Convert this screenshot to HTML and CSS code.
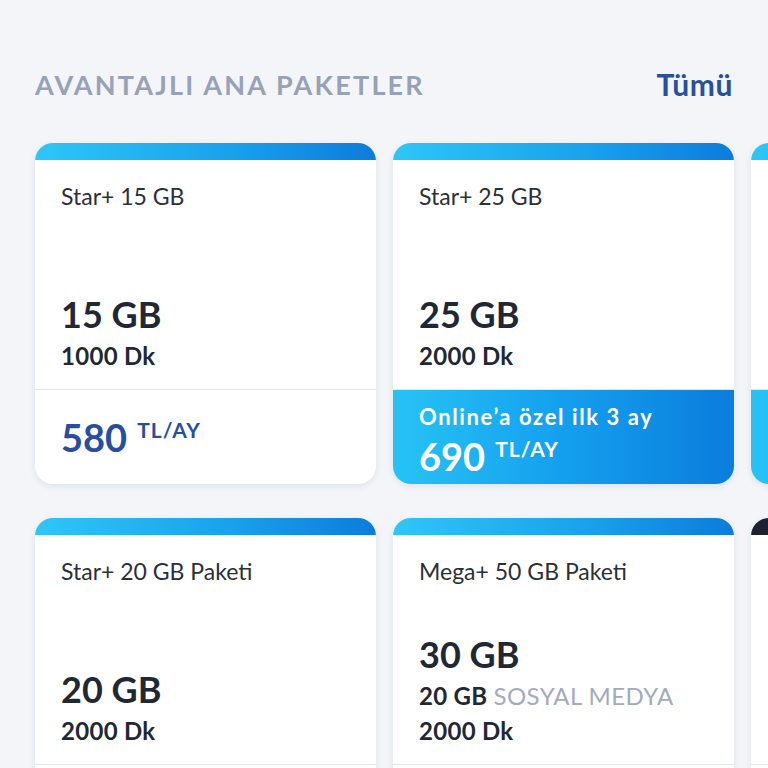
FILE: index.html
```html
<!DOCTYPE html>
<html lang="tr">
<head>
<meta charset="utf-8">
<title>Avantajlı Ana Paketler</title>
<link rel="stylesheet" href="styles.css">
</head>
<body>
<section class="packages">
  <header class="packages-head">
    <h2 class="packages-title">AVANTAJLI ANA PAKETLER</h2>
    <a class="packages-all" href="#">Tümü</a>
  </header>

  <div class="row">
    <article class="card">
      <div class="card-bar"></div>
      <div class="card-body">
        <div class="card-title">Star+ 15 GB</div>
        <div class="card-info">
          <div class="gb">15 GB</div>
          <div class="dk">1000 Dk</div>
        </div>
      </div>
      <div class="card-price">
        <div class="price"><span class="amount">580</span><span class="unit">TL/AY</span></div>
      </div>
    </article>

    <article class="card">
      <div class="card-bar"></div>
      <div class="card-body">
        <div class="card-title">Star+ 25 GB</div>
        <div class="card-info">
          <div class="gb">25 GB</div>
          <div class="dk">2000 Dk</div>
        </div>
      </div>
      <div class="card-price promo">
        <div class="promo-note">Online’a özel ilk 3 ay</div>
        <div class="price"><span class="amount">690</span><span class="unit">TL/AY</span></div>
      </div>
    </article>

    <article class="card">
      <div class="card-bar"></div>
      <div class="card-body"></div>
      <div class="card-price promo"></div>
    </article>
  </div>

  <div class="row">
    <article class="card">
      <div class="card-bar"></div>
      <div class="card-body">
        <div class="card-title">Star+ 20 GB Paketi</div>
        <div class="card-info">
          <div class="gb">20 GB</div>
          <div class="dk">2000 Dk</div>
        </div>
      </div>
      <div class="card-price"></div>
    </article>

    <article class="card">
      <div class="card-bar"></div>
      <div class="card-body">
        <div class="card-title">Mega+ 50 GB Paketi</div>
        <div class="card-info">
          <div class="gb">30 GB</div>
          <div class="dk">20 GB <span class="muted">SOSYAL MEDYA</span></div>
          <div class="dk">2000 Dk</div>
        </div>
      </div>
      <div class="card-price"></div>
    </article>

    <article class="card">
      <div class="card-bar dark"></div>
      <div class="card-body"></div>
      <div class="card-price"></div>
    </article>
  </div>
</section>
</body>
</html>
```

FILE: styles.css
```css
html, body {
  margin: 0;
  padding: 0;
  height: 100%;
  overflow: hidden;
  background: #f3f5f8;
}

body {
  font-family: "Lato", "Liberation Sans", sans-serif;
  color: #262b36;
}

.packages {
  padding: 64px 0 0 35px;
}

.packages-head {
  display: flex;
  justify-content: space-between;
  align-items: center;
  padding-right: 35px;
  height: 40px;
  margin-bottom: 39px;
}

.packages-title {
  margin: 0;
  font-size: 27px;
  font-weight: 700;
  letter-spacing: 2.2px;
  color: #98a1b5;
}

.packages-all {
  font-size: 30px;
  font-weight: 700;
  letter-spacing: 0.6px;
  color: #294f9f;
  text-decoration: none;
}

.row {
  display: flex;
  gap: 17px;
  margin-bottom: 34px;
}

.card {
  flex: 0 0 341px;
  display: flex;
  flex-direction: column;
  background: #ffffff;
  border-radius: 18px;
  overflow: hidden;
  box-shadow: 0 2px 6px rgba(40, 50, 80, 0.10);
}

.card-bar {
  height: 17px;
  background: linear-gradient(90deg, #2ec6f7 0%, #1aa3ec 55%, #0c7cdc 100%);
}

.card-bar.dark {
  background: #1e2230;
}

.card-body {
  height: 230px;
  box-sizing: border-box;
  padding: 20px 26px 16px;
  display: flex;
  flex-direction: column;
  border-bottom: 1px solid #e3e6eb;
}

.card-title {
  font-size: 23px;
  line-height: 32px;
  color: #2b2f38;
}

.card-info {
  margin-top: auto;
}

.gb {
  font-size: 36px;
  font-weight: 700;
  line-height: 48px;
  color: #222833;
}

.dk {
  font-size: 24px;
  font-weight: 700;
  line-height: 35px;
  letter-spacing: 0.3px;
  color: #222833;
}

.muted {
  font-weight: 400;
  color: #a3abbb;
  letter-spacing: 0.4px;
}

.card-price {
  height: 94px;
  box-sizing: border-box;
  padding: 0 26px;
  display: flex;
  flex-direction: column;
  justify-content: center;
  color: #284f9f;
}

.card-price.promo {
  background: linear-gradient(90deg, #27c3f5 0%, #149fee 50%, #0a7ddd 100%);
  color: #ffffff;
  padding-top: 4px;
}

.promo-note {
  font-size: 22px;
  font-weight: 700;
  letter-spacing: 1.6px;
  line-height: 28px;
  margin-bottom: 6px;
}

.price {
  display: flex;
  align-items: flex-start;
  gap: 10px;
}

.amount {
  font-size: 38px;
  font-weight: 700;
  line-height: 38px;
}

.unit {
  font-size: 21px;
  font-weight: 700;
  line-height: 24px;
  letter-spacing: 1px;
}
```
